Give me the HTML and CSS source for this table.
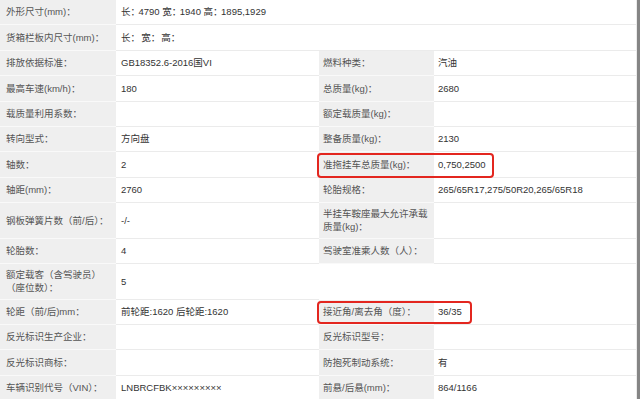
FILE: index.html
```
<!DOCTYPE html>
<html lang="zh">
<head>
<meta charset="utf-8">
<title>参数</title>
<link rel="stylesheet" href="styles.css">
</head>
<body>
<div class="sheet">
  <div class="row span"><div class="lab">外形尺寸(mm)：</div><div class="val"><span class="dims"><span class="dk">长：</span>4790 <span class="dk">宽：</span>1940 <span class="dk">高：</span>1895,1929</span></div></div>
  <div class="row span"><div class="lab">货箱栏板内尺寸(mm)：</div><div class="val"><span class="dims"><span class="dk">长：</span> <span class="dk">宽：</span> <span class="dk">高：</span></span></div></div>
  <div class="row"><div class="lab">排放依据标准：</div><div class="val">GB18352.6-2016国VI</div><div class="lab l2">燃料种类：</div><div class="val v2">汽油</div></div>
  <div class="row"><div class="lab">最高车速(km/h)：</div><div class="val">180</div><div class="lab l2">总质量(kg)：</div><div class="val v2">2680</div></div>
  <div class="row"><div class="lab">载质量利用系数：</div><div class="val"></div><div class="lab l2">额定载质量(kg)：</div><div class="val v2"></div></div>
  <div class="row"><div class="lab">转向型式：</div><div class="val">方向盘</div><div class="lab l2">整备质量(kg)：</div><div class="val v2">2130</div></div>
  <div class="row"><div class="lab">轴数：</div><div class="val">2</div><div class="lab l2">准拖挂车总质量(kg)：</div><div class="val v2">0,750,2500</div></div>
  <div class="row"><div class="lab">轴距(mm)：</div><div class="val">2760</div><div class="lab l2">轮胎规格：</div><div class="val v2">265/65R17,275/50R20,265/65R18</div></div>
  <div class="row tall"><div class="lab">钢板弹簧片数（前/后）：</div><div class="val">-/-</div><div class="lab l2">半挂车鞍座最大允许承载质量(kg)：</div><div class="val v2"></div></div>
  <div class="row"><div class="lab">轮胎数：</div><div class="val">4</div><div class="lab l2">驾驶室准乘人数（人）：</div><div class="val v2"></div></div>
  <div class="row tall"><div class="lab">额定载客（含驾驶员）（座位数）：</div><div class="val">5</div><div class="blank"></div><div class="blank"></div></div>
  <div class="row"><div class="lab">轮距（前/后)mm：</div><div class="val">前轮距:1620 后轮距:1620</div><div class="lab l2">接近角/离去角（度）：</div><div class="val v2">36/35</div></div>
  <div class="row"><div class="lab">反光标识生产企业：</div><div class="val"></div><div class="lab l2">反光标识型号：</div><div class="val v2"></div></div>
  <div class="row"><div class="lab">反光标识商标：</div><div class="val"></div><div class="lab l2">防抱死制动系统：</div><div class="val v2">有</div></div>
  <div class="row"><div class="lab">车辆识别代号（VIN）：</div><div class="val">LNBRCFBK×××××××××</div><div class="lab l2">前悬/后悬(mm)：</div><div class="val v2">864/1166</div></div>
  <div class="mark mark-a"></div>
  <div class="mark mark-b"></div>
</div>
</body>
</html>
```
FILE: styles.css
```
* { box-sizing: border-box; }
html, body { margin: 0; padding: 0; background: #fff; }
body {
  font-family: "Liberation Sans", "Noto Sans CJK SC", sans-serif;
  font-size: 9.5px;
  color: #333;
  overflow: hidden;
}
.sheet {
  position: relative;
  width: 640px;
  border-right: 3px solid #858585;
}
.row {
  display: grid;
  grid-template-columns: 116px 203px 115px 203px;
  height: 25.4px;
}
.row.span { grid-template-columns: 116px 1fr; }
.row.tall { height: 35.5px; }
.lab, .val, .blank {
  display: flex;
  align-items: center;
  line-height: 13.5px;
}
.lab {
  background: #efefef;
  color: #555;
  padding: 0 4px 0 6px;
  border-bottom: 1px solid #f9f9f9;
}
.lab.l2 { padding-left: 4px; padding-right: 4px; }
.val {
  background: #fff;
  padding-left: 5px;
  border-bottom: 1px solid #ebebeb;
}
.dims { white-space: pre; }
.dk { display: inline-block; width: 17.5px; white-space: nowrap; }
.val.v2 { padding-left: 4px; border-right: 1px solid #ebebeb; }
.row.span .val { border-right: 1px solid #ebebeb; }
.blank { background: #fff; }
.blank:last-child { border-right: 1px solid #ebebeb; }
.mark {
  position: absolute;
  border: 2px solid #e3261f;
  border-radius: 4px;
}
.mark-a { left: 317px; top: 152.5px; width: 177px; height: 25px; }
.mark-b { left: 317px; top: 301px; width: 155px; height: 22.5px; }
```
